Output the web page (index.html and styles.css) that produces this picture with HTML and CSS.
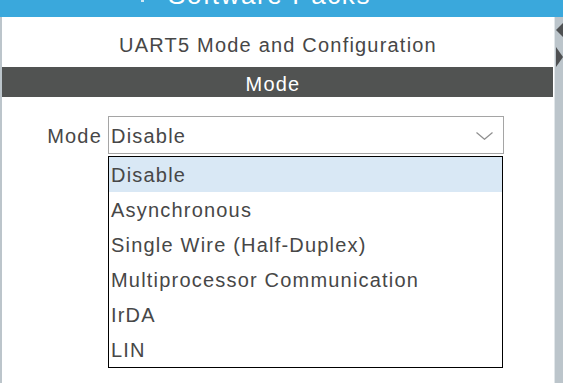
FILE: index.html
```html
<!DOCTYPE html>
<html lang="en">
<head>
<meta charset="utf-8">
<title>UART5 Mode and Configuration</title>
<link rel="stylesheet" href="styles.css">
</head>
<body>
<div class="app">
  <div class="topbar">
    <span class="topbar-icon"></span>
    <span class="topbar-title">Software Packs</span>
  </div>
  <div class="workspace">
    <div class="edge-left"></div>
    <div class="panel">
      <div class="panel-title">UART5 Mode and Configuration</div>
      <div class="section-bar">Mode</div>
      <div class="form">
        <div class="field-row">
          <span class="field-label">Mode</span>
          <div class="select">
            <span class="select-value">Disable</span>
            <svg class="chevron" width="17" height="8" viewBox="0 0 17 8"><polyline points="0.5,0.5 8.5,7.3 16.5,0.5" fill="none" stroke="#8f8f8f" stroke-width="1.2"/></svg>
          </div>
        </div>
        <ul class="dropdown">
          <li class="option selected">Disable</li>
          <li class="option">Asynchronous</li>
          <li class="option">Single Wire (Half-Duplex)</li>
          <li class="option">Multiprocessor Communication</li>
          <li class="option">IrDA</li>
          <li class="option">LIN</li>
        </ul>
      </div>
    </div>
    <div class="divider"></div>
    <div class="edge-right">
      <svg class="side-arrows" width="8" height="60" viewBox="0 0 8 60">
        <polygon points="1,13 8,6 8,20" fill="#4e5052"/>
        <polygon points="1,30 1,50 8,40" fill="#4e5052"/>
      </svg>
    </div>
  </div>
</div>
</body>
</html>
```
FILE: styles.css
```css
body {
  margin: 0;
  width: 563px;
  height: 383px;
  overflow: hidden;
  background: #bcc5cb;
  font-family: "Liberation Sans", Arial, sans-serif;
}

.app {
  display: flex;
  flex-direction: column;
  height: 383px;
}

.topbar {
  flex: none;
  height: 17px;
  background: #3aa8dc;
  color: #ffffff;
  overflow: hidden;
  display: flex;
  align-items: flex-start;
}

.topbar-icon {
  flex: none;
  width: 3px;
  height: 2px;
  margin-left: 141px;
  background: #cfe8f5;
}

.topbar-title {
  flex: none;
  font-size: 26px;
  line-height: 26px;
  letter-spacing: 1.6px;
  margin-top: -18px;
  margin-left: 24px;
}

.workspace {
  flex: 1;
  display: flex;
}

.edge-left {
  flex: none;
  width: 2px;
  background: #bcc5cb;
}

.panel {
  flex: none;
  width: 552px;
  background: #ffffff;
  color: #474747;
  font-size: 20px;
  letter-spacing: 1.2px;
}

.panel-title {
  height: 50px;
  box-sizing: border-box;
  padding-top: 17px;
  line-height: 23px;
  text-align: center;
}

.section-bar {
  height: 30px;
  box-sizing: border-box;
  margin-right: 1px;
  padding-top: 2px;
  padding-right: 9px;
  line-height: 30px;
  background: #515352;
  color: #ffffff;
  text-align: center;
}

.form {
  padding-top: 19px;
}

.field-row {
  display: flex;
  align-items: baseline;
}

.field-label {
  width: 100px;
  margin-right: 6px;
  text-align: right;
  line-height: 38px;
}

.select {
  width: 396px;
  height: 38px;
  box-sizing: border-box;
  border: 1px solid #a5a5a5;
  padding: 2px 10px 0 2px;
  display: flex;
  justify-content: space-between;
  align-items: center;
}

.select-value {
  line-height: 34px;
}

.chevron {
  display: block;
  flex: none;
}

.dropdown {
  list-style: none;
  margin: 1px 0 0 106px;
  padding: 0;
  width: 395px;
  box-sizing: border-box;
  border: 1px solid #000000;
}

.option {
  height: 35px;
  box-sizing: border-box;
  padding: 2px 0 0 2px;
  line-height: 33px;
  white-space: nowrap;
}

.option.selected {
  background: #d9e8f5;
}

.divider {
  flex: none;
  width: 1px;
  background: #e1e6e9;
}

.edge-right {
  flex: none;
  width: 8px;
  background: #bcc5cb;
}

.side-arrows {
  display: block;
}
```
